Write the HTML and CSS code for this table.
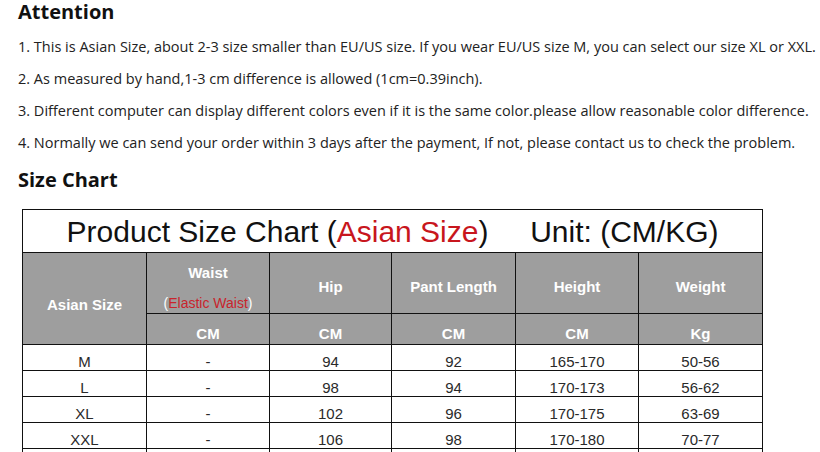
FILE: index.html
```html
<!DOCTYPE html>
<html>
<head>
<meta charset="utf-8">
<link rel="stylesheet" href="styles.css">
</head>
<body>
<div class="page">
  <h2 class="heading">Attention</h2>
  <div class="notes">
    <p>1. This is Asian Size, about 2-3 size smaller than EU/US size. If you wear EU/US size M, you can select our size XL or XXL.</p>
    <p>2. As measured by hand,1-3 cm difference is allowed (1cm=0.39inch).</p>
    <p>3. Different computer can display different colors even if it is the same color.please allow reasonable color difference.</p>
    <p>4. Normally we can send your order within 3 days after the payment, If not, please contact us to check the problem.</p>
  </div>
  <h2 class="heading heading-chart">Size Chart</h2>
  <table class="chart">
    <colgroup>
      <col class="c1"><col class="c2"><col class="c3"><col class="c4"><col class="c5"><col class="c6">
    </colgroup>
    <tr class="title-row">
      <td colspan="6">Product Size Chart (<span class="red">Asian Size</span>)&nbsp;&nbsp;&nbsp;&nbsp; Unit: (CM/KG)</td>
    </tr>
    <tr class="head-row">
      <th rowspan="2" class="asian">Asian Size</th>
      <th class="waist"><div class="waist-top">Waist</div><div class="waist-sub">(<span class="red-thin">Elastic Waist</span>)</div></th>
      <th>Hip</th>
      <th>Pant Length</th>
      <th>Height</th>
      <th>Weight</th>
    </tr>
    <tr class="unit-row">
      <th>CM</th><th>CM</th><th>CM</th><th>CM</th><th>Kg</th>
    </tr>
    <tr class="data"><td>M</td><td>-</td><td>94</td><td>92</td><td>165-170</td><td>50-56</td></tr>
    <tr class="data"><td>L</td><td>-</td><td>98</td><td>94</td><td>170-173</td><td>56-62</td></tr>
    <tr class="data"><td>XL</td><td>-</td><td>102</td><td>96</td><td>170-175</td><td>63-69</td></tr>
    <tr class="data"><td>XXL</td><td>-</td><td>106</td><td>98</td><td>170-180</td><td>70-77</td></tr>
    <tr class="data"><td>XXXL</td><td>-</td><td>110</td><td>100</td><td>175-185</td><td>78-85</td></tr>
  </table>
</div>
</body>
</html>
```

FILE: styles.css
```css
html, body {
  margin: 0;
  padding: 0;
  background: #fff;
}
.page {
  padding-left: 18px;
  color: #111;
  overflow: hidden;
  height: 452px;
}
.heading {
  margin: 0;
  font-family: "Open Sans", "Noto Sans", sans-serif;
  font-weight: 700;
  font-size: 20px;
  line-height: 24px;
  color: #111;
}
.notes {
  margin-top: 7px;
}
.notes p {
  margin: 0;
  font-family: "Open Sans", "Noto Sans", sans-serif;
  font-size: 14.5px;
  line-height: 32px;
  color: #222;
  white-space: nowrap;
}
.heading-chart {
  margin-top: 9px;
}
.chart {
  margin-top: 17px;
  margin-left: 4px;
  border-collapse: collapse;
  table-layout: fixed;
  width: 741px;
  font-family: "Liberation Sans", Arial, sans-serif;
}
.c1 { width: 124px; }
.c2 { width: 123px; }
.c3 { width: 122px; }
.c4 { width: 124px; }
.c5 { width: 123px; }
.c6 { width: 124px; }
.chart td, .chart th {
  border: 1px solid #111;
  padding: 0;
  text-align: center;
}
.title-row { height: 43px; }
.title-row td {
  font-size: 30px;
  line-height: 34px;
  color: #111;
  vertical-align: middle;
  padding-top: 1px;
}
.red { color: #c8161d; }
.head-row th, .unit-row th {
  background: #9e9e9e;
  color: #fff;
  font-weight: 700;
  font-size: 15px;
  line-height: 18px;
}
.head-row { height: 61px; }
.head-row th {
  vertical-align: middle;
  padding-top: 8px;
}
.head-row th.asian {
  padding-top: 12px;
}
.head-row th.waist {
  vertical-align: top;
  padding-top: 11px;
}
.waist-top {
  line-height: 18px;
}
.waist-sub {
  line-height: 18px;
  margin-top: 12px;
  font-weight: 400;
  font-size: 14px;
}
.red-thin {
  color: #c9242c;
}
.unit-row { height: 31px; }
.unit-row th {
  vertical-align: bottom;
  padding-bottom: 1px;
}
.data { height: 26px; }
.data td {
  font-size: 15px;
  line-height: 16px;
  color: #2a2a2a;
  vertical-align: middle;
  padding-top: 9px;
}
```
